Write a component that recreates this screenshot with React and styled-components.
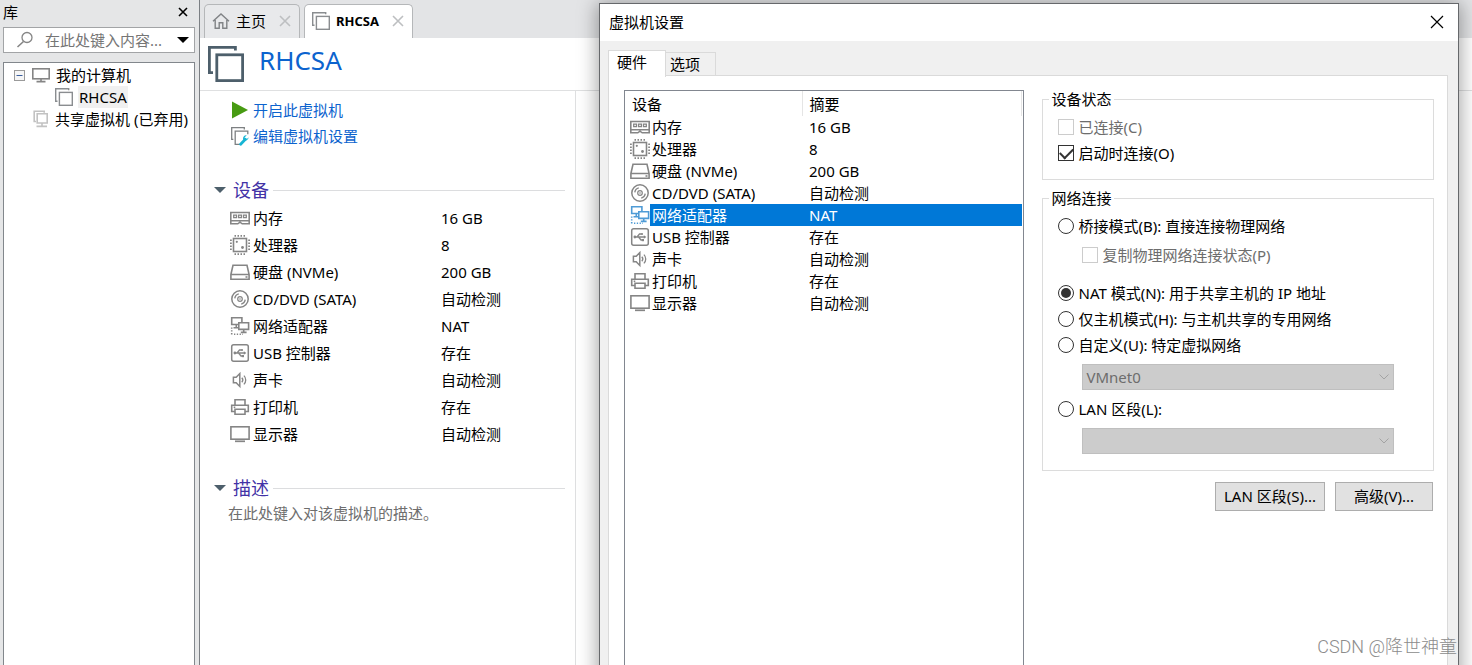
import React, { useState } from "react";
import styled, { createGlobalStyle, css } from "styled-components";

const GlobalStyle = createGlobalStyle`
  * {
    box-sizing: border-box;
  }

  body {
    margin: 0;
    overflow: hidden;
    background: #fff;
    color: #000;
    font-family: "Noto Sans", "Noto Sans CJK SC", sans-serif;
    font-size: 15px;
    line-height: 22px;
  }

  button,
  input,
  select {
    margin: 0;
    font: inherit;
    color: inherit;
  }

  svg {
    display: block;
    flex: none;
  }
`;

// Layout
const Page = styled.div`
  position: relative;
  display: flex;
  height: 100vh;
  overflow: hidden;
`;

const IconButton = styled.button`
  display: flex;
  align-items: center;
  justify-content: center;
  width: ${(p) => p.$size || 16}px;
  height: ${(p) => p.$size || 16}px;
  padding: 0;
  border: none;
  background: none;
  cursor: pointer;
`;

// Library sidebar
const Sidebar = styled.aside`
  display: flex;
  flex-direction: column;
  width: 200px;
  flex: none;
  padding: 0 4px 0 3px;
  background: #e5e6e7;
  border-right: 1px solid #7b7f83;
`;

const SidebarHead = styled.div`
  display: flex;
  align-items: center;
  justify-content: space-between;
  height: 27px;
  padding: 0 4px 3px 0;
`;

const SearchBox = styled.div`
  display: flex;
  align-items: center;
  height: 26px;
  padding: 0 3px 0 12px;
  background: #fff;
  border: 1px solid #a2a4a6;

  input {
    flex: 1;
    min-width: 0;
    padding: 0;
    margin-left: 11px;
    border: none;
    outline: none;
    background: none;
  }

  input::placeholder {
    color: #757575;
    opacity: 1;
  }
`;

const Tree = styled.ul`
  flex: 1;
  margin: 9px 0 0;
  padding: 1px 0 0;
  list-style: none;
  background: #fff;
  border: 1px solid #82878c;
  border-bottom: none;
`;

const TreeItem = styled.li`
  display: flex;
  align-items: center;
  gap: 5px;
  height: 22px;
  padding-left: ${(p) => p.$indent}px;
  white-space: nowrap;

  span {
    padding: 0 1px;
    background: ${(p) => (p.$selected ? "#f0f0f0" : "none")};
  }
`;

// Main area
const Main = styled.main`
  display: flex;
  flex-direction: column;
  flex: 1;
  min-width: 0;
`;

const TabStrip = styled.div`
  display: flex;
  align-items: flex-end;
  gap: 4px;
  height: 38px;
  padding: 0 4px;
  background: #e3e4e6;
`;

const Tab = styled.div`
  display: flex;
  align-items: center;
  justify-content: space-between;
  width: ${(p) => p.$width}px;
  height: 34px;
  padding: 0 6px 2px 7px;
  background: ${(p) => (p.$active ? "#fff" : "#e8e9eb")};
  border: 1px solid #b5b7b9;
  border-bottom: none;
  border-radius: 5px 5px 0 0;
`;

const TabLabel = styled.button`
  display: flex;
  align-items: center;
  gap: 6px;
  padding: 0;
  border: none;
  background: none;
  font-size: ${(p) => (p.$active ? 13 : 15)}px;
  font-weight: ${(p) => (p.$active ? 700 : 400)};
`;

const VmHeader = styled.header`
  display: flex;
  align-items: center;
  gap: 15px;
  height: 53px;
  padding: 0 8px;
  border-bottom: 1px solid #dfe0e1;

  h1 {
    margin: 0;
    padding-bottom: 8px;
    font-size: 26px;
    line-height: 32px;
    font-weight: 400;
    color: #0c63ce;
  }
`;

const Details = styled.div`
  flex: 1;
  width: 376px;
  padding: 6px 10px 0 12px;
  border-right: 1px solid #dfe0e1;
`;

const ActionLink = styled.a`
  display: flex;
  align-items: center;
  gap: 3px;
  width: max-content;
  height: 26px;
  padding-left: 18px;
  color: #0c63ce;
  text-decoration: none;
`;

const SectionTitle = styled.h2`
  display: flex;
  align-items: center;
  gap: 4px;
  margin: 29px 0 2px;
  height: 24px;
  padding-left: 2px;
  font-size: 18px;
  line-height: 24px;
  font-weight: 400;
  color: #4232a6;

  svg {
    margin-right: 3px;
  }

  &::after {
    content: "";
    flex: 1;
    border-top: 1px solid #dcdddf;
  }
`;

const DeviceTable = styled.table`
  width: 100%;
  border-collapse: collapse;
  table-layout: fixed;

  td {
    height: 27px;
    padding: 0;
  }

  td:first-child {
    width: 41px;
    padding-left: 18px;
  }

  td:last-child {
    width: 124px;
  }
`;

const Description = styled.p`
  margin: 0;
  padding-left: 16px;
  color: #6e6e6e;
`;

// Settings dialog
const Dialog = styled.section`
  position: absolute;
  top: 3px;
  left: 599px;
  right: 13px;
  bottom: -20px;
  display: flex;
  flex-direction: column;
  background: #f0f0f0;
  border: 1px solid #66686b;
  box-shadow: 0 2px 18px 2px rgba(0, 0, 0, 0.35);
`;

const DialogTitle = styled.div`
  display: flex;
  align-items: center;
  justify-content: space-between;
  height: 37px;
  padding: 0 13px 2px 9px;
  background: #fff;

  h2 {
    margin: 0;
    font-size: 15px;
    font-weight: 400;
  }
`;

const DialogTabs = styled.div`
  display: flex;
  align-items: flex-end;
  height: 35px;
  padding: 0 8px;
`;

const DialogTab = styled.button`
  height: 24px;
  padding: 0 15px 0 4px;
  background: #f0f0f0;
  border: 1px solid #dadada;
  border-left: none;
  text-align: left;

  ${(p) =>
    p.$active &&
    css`
      height: 27px;
      padding: 0 18px 5px 8px;
      margin-bottom: -1px;
      background: #fff;
      border-left: 1px solid #dadada;
      border-bottom: none;
      z-index: 1;
    `}
`;

const DialogPanel = styled.div`
  flex: 1;
  display: flex;
  gap: 18px;
  margin: -1px 10px 0 8px;
  padding: 12px 13px 0 15px;
  background: #fff;
  border: 1px solid #dadada;
`;

const HardwareList = styled.div`
  flex: 399 1 0;
  margin-top: 2px;
  padding-right: 1px;
  border: 1px solid #828790;
  border-bottom: none;
`;

const HardwareTable = styled.table`
  width: 100%;
  border-collapse: collapse;
  table-layout: fixed;

  th {
    height: 25px;
    padding: 0 7px;
    font-weight: 400;
    text-align: left;
    border-right: 1px solid #e5e5e5;
  }

  td {
    height: 22px;
    padding: 0 0 0 2px;
    line-height: 20px;
  }

  td:first-child {
    padding-left: 5px;
  }

  td:last-child {
    padding-left: 7px;
  }
`;

const HardwareRow = styled.tr`
  cursor: default;

  ${(p) =>
    p.$selected &&
    css`
      td:not(:first-child) {
        color: #fff;
        background: #0078d7;
      }

      svg {
        color: #4e9bd6;
      }
    `}
`;

const Options = styled.div`
  flex: 393 1 0;
  min-width: 0;
`;

const Group = styled.fieldset`
  min-width: 0;
  margin: 0 0 7px;
  padding: 4px 15px ${(p) => p.$bottom}px;
  border: 1px solid #dcdcdc;

  legend {
    margin-left: -9px;
    padding: 0 2px;
  }
`;

const Choice = styled.label`
  display: flex;
  align-items: center;
  gap: 4px;
  height: 26px;
  margin-left: ${(p) => (p.$nested ? 24 : 0)}px;
  margin-top: ${(p) => p.$space || 0}px;
  color: ${(p) => (p.$disabled ? "#6d6d6d" : "#000")};
  white-space: nowrap;
`;

const Checkbox = styled.input.attrs({ type: "checkbox" })`
  appearance: none;
  display: grid;
  place-items: center;
  flex: none;
  width: 16px;
  height: 16px;
  background: #fff;
  border: 1px solid #333;

  &:disabled {
    border-color: #ccc;
  }

  &:checked::after {
    content: "";
    width: 11px;
    height: 6px;
    margin-bottom: 3px;
    border-left: 2px solid #333;
    border-bottom: 2px solid #333;
    transform: rotate(-45deg);
  }
`;

const Radio = styled.input.attrs({ type: "radio" })`
  appearance: none;
  display: grid;
  place-items: center;
  flex: none;
  width: 16px;
  height: 16px;
  background: #fff;
  border: 1px solid #333;
  border-radius: 50%;

  &:checked::after {
    content: "";
    width: 10px;
    height: 10px;
    border-radius: 50%;
    background: #333;
  }
`;

const Combo = styled.div`
  display: grid;
  align-items: center;
  margin: 6px 24px 6px 24px;

  select,
  svg {
    grid-area: 1 / 1;
  }

  select {
    appearance: none;
    width: 100%;
    height: 26px;
    padding: 0 3px;
    color: #6d6d6d;
    background: #ccc;
    border: 1px solid #bfbfbf;
    border-radius: 0;
    opacity: 1;
  }

  svg {
    justify-self: end;
    margin-right: 5px;
    pointer-events: none;
  }
`;

const ButtonRow = styled.div`
  display: flex;
  justify-content: flex-end;
  gap: 10px;
  margin-top: 11px;
  padding-right: 1px;
`;

const PushButton = styled.button`
  min-width: 98px;
  height: 29px;
  padding: 0 8px 2px;
  background: #e1e1e1;
  border: 1px solid #adadad;
`;

const Watermark = styled.div`
  position: absolute;
  right: 15px;
  bottom: 6px;
  font-family: Roboto, "Noto Sans CJK SC", sans-serif;
  font-size: 18px;
  font-weight: 300;
  line-height: 24px;
  color: #8c8c8c;
`;

// Icons
const Svg = ({ w = 20, h = w, color = "#858585", children }) => (
  <svg
    width={w}
    height={h}
    viewBox={`0 0 ${w} ${h}`}
    fill="none"
    stroke="currentColor"
    strokeWidth="1.6"
    color={color}
    aria-hidden="true"
  >
    {children}
  </svg>
);

const CloseIcon = ({ size = 12, color = "#000", width = 1.2 }) => (
  <Svg w={size} color={color}>
    <path d={`M1 1L${size - 1} ${size - 1}M${size - 1} 1L1 ${size - 1}`} strokeWidth={width} />
  </Svg>
);

const MemoryIcon = () => (
  <Svg>
    <path d="M.8 4.5h18.4v11.3h-7l-2.2-1.6-2.2 1.6h-7zM.8 12.8h18.4" />
    <path d="M3.7 7.2h2.8v2.4H3.7zM8.6 7.2h2.8v2.4H8.6zM13.5 7.2h2.8v2.4h-2.8z" strokeWidth="1.3" />
  </Svg>
);

const CpuIcon = () => (
  <Svg>
    <rect x="3.5" y="3.5" width="13" height="13" />
    <path
      d="M4.500.9h11.500M4.500 19.100h11.500M.9 4.500v11.500M19.100 4.500v11.500"
      strokeWidth="1.8"
      strokeDasharray="1.5 1.500"
    />
    <circle cx="6.8" cy="6.8" r="1.1" fill="currentColor" stroke="none" />
    <circle cx="12.5" cy="12.5" r="1.4" fill="currentColor" stroke="none" />
  </Svg>
);

const DiskIcon = () => (
  <Svg>
    <path d="M.9 12.5L3 3.2h14l2.1 9.3v4.8H.9zM.9 12.5h18.2" />
    <path d="M15.5 15h2" />
  </Svg>
);

const DiscIcon = () => (
  <Svg>
    <circle cx="10" cy="10" r="8.2" strokeWidth="1.5" />
    <circle cx="10" cy="10" r="2.3" strokeWidth="1.2" />
    <circle cx="10" cy="10" r=".8" fill="currentColor" stroke="none" />
    <path d="M4.8 9.3a5.2 5.2 0 0 1 4-4.400M15.200 10.700a5.200 5.200 0 0 1-4 4.400" strokeWidth="1.4" />
  </Svg>
);

const NetworkIcon = () => (
  <Svg>
    <path d="M8.5 8.500H1.700V1.700h10.200v4.500M6.300 8.500v3M3.500 11.700H8" />
    <path d="M8.800 6.800h9.800v6.600H8.800zM13.700 13.400v2.800M10.800 16.400h5.800" />
    <path d="M1.700 11.500v7M4 18.200h9" strokeDasharray="1.3 1.5" />
  </Svg>
);

const UsbIcon = () => (
  <Svg>
    <rect x="1.7" y="1.7" width="16.6" height="16.6" rx="2" strokeWidth="1.5" />
    <path d="M5 10h10M7 10l2.5-3h2M8.5 10l2.500 3h1.500" strokeWidth="1.3" />
    <path d="M13.8 8.200l2.600 1.800-2.600 1.800z" fill="currentColor" stroke="none" />
    <circle cx="4.9" cy="10" r="1.4" fill="currentColor" stroke="none" />
    <circle cx="12" cy="7" r="1.1" fill="currentColor" stroke="none" />
    <path d="M11.800 12h2.200v2.200h-2.200z" fill="currentColor" stroke="none" />
  </Svg>
);

const SoundIcon = () => (
  <Svg>
    <path d="M3.400 7.300h2.800L9.800 3.600v12.800l-3.600-3.700H3.400z" strokeWidth="1.5" />
    <path d="M11.800 7.700a3.400 3.400 0 0 1 0 4.600M13.900 5.600a6.200 6.200 0 0 1 0 8.800" strokeWidth="1.3" />
  </Svg>
);

const PrinterIcon = () => (
  <Svg>
    <path d="M5 8V2.700h10V8M5 14.500H1.700V8.200h16.600v6.300H15M5 12.300h10v5H5z" />
    <path d="M3.700 10.300h1.600" />
  </Svg>
);

const DisplayIcon = () => (
  <Svg>
    <rect x=".9" y="2.8" width="18.2" height="12.4" />
    <path d="M5 17.3h10" strokeWidth="1.7" />
  </Svg>
);

const VmIcon = ({ size = 18, color = "#8a8d90" }) => (
  <svg
    width={size}
    height={size}
    viewBox="0 0 18 18"
    fill="none"
    stroke={color}
    strokeWidth="1.4"
    aria-hidden="true"
  >
    <path d="M2.500 13.300H.7V.7h13v1.600" />
    <rect x="4.4" y="4.4" width="12.9" height="12.9" />
  </svg>
);

const HomeIcon = () => (
  <Svg w={18} color="#808386">
    <path d="M1 9.300L9 2l8 7.300M3.200 8v8.300h4v-5.500h3.600v5.500h4V8" strokeWidth="1.4" />
  </Svg>
);

const SearchIcon = () => (
  <Svg w={18}>
    <circle cx="11" cy="6.5" r="5" strokeWidth="1.3" />
    <path d="M7.500 10.500L1.500 16" />
  </Svg>
);

const CaretIcon = ({ color = "#000" }) => (
  <Svg w={12} h={6} color={color}>
    <path d="M0 0h12L6 6z" fill="currentColor" stroke="none" />
  </Svg>
);

const CollapseIcon = () => (
  <Svg w={11}>
    <rect x=".5" y=".5" width="10" height="10" strokeWidth="1" stroke="#9a9a9a" fill="#f6f6f6" />
    <path d="M2.500 5.500h6" stroke="#3b5f9e" strokeWidth="1" />
  </Svg>
);

const ComputerIcon = () => (
  <Svg w={18} h={16}>
    <rect x=".8" y="1.8" width="16.4" height="10" />
    <path d="M9 12v2.400M4.500 14.600h9" />
  </Svg>
);

const SharedIcon = () => (
  <Svg w={16} h={18} color="#c2c2c2">
    <path d="M3 11.500H1.200V1.200h10v1.500" />
    <path d="M4.200 3.800h10V13h-10zM9 13v3M3.500 16.400h10.500" />
  </Svg>
);

const PlayIcon = () => (
  <Svg color="#479b12">
    <path d="M2 1.500v17L18 10z" fill="currentColor" stroke="none" />
  </Svg>
);

const EditIcon = () => (
  <Svg color="#7d8082">
    <path d="M3.300 13.300H1.700V1.700h12.600v1.800M10 18.300H5.200V5.200h12.600v3" strokeWidth="1.3" />
    <path d="M10.600 18.200l4.800-5" stroke="#16b5d4" strokeWidth="2.800" strokeLinecap="round" />
    <path
      d="M18.600 11.300l-1.900 2-1.600-.4-.4-1.600 2-1.900a3.200 3.200 0 0 0-3.500 4.300 3.200 3.200 0 0 0 5.400-2.400z"
      fill="#16b5d4"
      stroke="none"
    />
  </Svg>
);

const ChevronIcon = () => (
  <Svg w={10} h={6} color="#a3a3a3">
    <path d="M.5 .5L5 5L9.5 .5" strokeWidth="1" />
  </Svg>
);

const devices = [
  { name: "内存", summary: "16 GB", Icon: MemoryIcon },
  { name: "处理器", summary: "8", Icon: CpuIcon },
  { name: "硬盘 (NVMe)", summary: "200 GB", Icon: DiskIcon },
  { name: "CD/DVD (SATA)", summary: "自动检测", Icon: DiscIcon },
  { name: "网络适配器", summary: "NAT", Icon: NetworkIcon },
  { name: "USB 控制器", summary: "存在", Icon: UsbIcon },
  { name: "声卡", summary: "自动检测", Icon: SoundIcon },
  { name: "打印机", summary: "存在", Icon: PrinterIcon },
  { name: "显示器", summary: "自动检测", Icon: DisplayIcon },
];

const Library = () => (
  <Sidebar>
    <SidebarHead>
      <span>库</span>
      <IconButton aria-label="关闭库">
        <CloseIcon size={10} width={1.6} />
      </IconButton>
    </SidebarHead>
    <SearchBox>
      <SearchIcon />
      <input type="text" aria-label="搜索" placeholder="在此处键入内容..." />
      <IconButton aria-label="搜索选项">
        <CaretIcon />
      </IconButton>
    </SearchBox>
    <Tree>
      <TreeItem $indent={8}>
        <IconButton $size={15} aria-label="折叠">
          <CollapseIcon />
        </IconButton>
        <ComputerIcon />
        <span>我的计算机</span>
      </TreeItem>
      <TreeItem $indent={51} $selected>
        <VmIcon />
        <span>RHCSA</span>
      </TreeItem>
      <TreeItem $indent={29}>
        <SharedIcon />
        <span>共享虚拟机 (已弃用)</span>
      </TreeItem>
    </Tree>
  </Sidebar>
);

const VmSummary = () => (
  <Main>
    <TabStrip>
      <Tab $width={96}>
        <TabLabel>
          <HomeIcon />
          主页
        </TabLabel>
        <IconButton aria-label="关闭主页">
          <CloseIcon color="#bdbfc1" width={1.6} />
        </IconButton>
      </Tab>
      <Tab $width={109} $active>
        <TabLabel $active>
          <VmIcon />
          RHCSA
        </TabLabel>
        <IconButton aria-label="关闭 RHCSA">
          <CloseIcon color="#bdbfc1" width={1.6} />
        </IconButton>
      </Tab>
    </TabStrip>
    <VmHeader>
      <VmIcon size={36} color="#4d5f6b" />
      <h1>RHCSA</h1>
    </VmHeader>
    <Details>
      <ActionLink href="#start">
        <PlayIcon />
        开启此虚拟机
      </ActionLink>
      <ActionLink href="#edit">
        <EditIcon />
        编辑虚拟机设置
      </ActionLink>
      <SectionTitle>
        <CaretIcon color="#4d5f6b" />
        设备
      </SectionTitle>
      <DeviceTable>
        <tbody>
          {devices.map(({ name, summary, Icon }) => (
            <tr key={name}>
              <td>
                <Icon />
              </td>
              <td>{name}</td>
              <td>{summary}</td>
            </tr>
          ))}
        </tbody>
      </DeviceTable>
      <SectionTitle>
        <CaretIcon color="#4d5f6b" />
        描述
      </SectionTitle>
      <Description>在此处键入对该虚拟机的描述。</Description>
    </Details>
  </Main>
);

const SettingsDialog = () => {
  const [selected, setSelected] = useState("网络适配器");
  const [mode, setMode] = useState("nat");
  const [autoConnect, setAutoConnect] = useState(true);

  const radio = (value) => (
    <Radio name="mode" checked={mode === value} onChange={() => setMode(value)} />
  );

  return (
    <Dialog role="dialog" aria-labelledby="settings-title">
      <DialogTitle>
        <h2 id="settings-title">虚拟机设置</h2>
        <IconButton aria-label="关闭">
          <CloseIcon size={14} />
        </IconButton>
      </DialogTitle>
      <DialogTabs>
        <DialogTab $active>硬件</DialogTab>
        <DialogTab>选项</DialogTab>
      </DialogTabs>
      <DialogPanel>
        <HardwareList>
          <HardwareTable>
            <colgroup>
              <col width="25" />
              <col width="152" />
              <col />
            </colgroup>
            <thead>
              <tr>
                <th colSpan={2}>设备</th>
                <th>摘要</th>
              </tr>
            </thead>
            <tbody>
              {devices.map(({ name, summary, Icon }) => (
                <HardwareRow
                  key={name}
                  $selected={name === selected}
                  onClick={() => setSelected(name)}
                >
                  <td>
                    <Icon />
                  </td>
                  <td>{name}</td>
                  <td>{summary}</td>
                </HardwareRow>
              ))}
            </tbody>
          </HardwareTable>
        </HardwareList>

        <Options>
          <Group $bottom={13}>
            <legend>设备状态</legend>
            <Choice $disabled>
              <Checkbox disabled />
              已连接(C)
            </Choice>
            <Choice>
              <Checkbox
                checked={autoConnect}
                onChange={(e) => setAutoConnect(e.target.checked)}
              />
              启动时连接(O)
            </Choice>
          </Group>

          <Group $bottom={10}>
            <legend>网络连接</legend>
            <Choice>{radio("bridged")}桥接模式(B): 直接连接物理网络</Choice>
            <Choice $nested $disabled $space={3}>
              <Checkbox disabled />
              复制物理网络连接状态(P)
            </Choice>
            <Choice $space={12}>{radio("nat")}NAT 模式(N): 用于共享主机的 IP 地址</Choice>
            <Choice>{radio("hostonly")}仅主机模式(H): 与主机共享的专用网络</Choice>
            <Choice>{radio("custom")}自定义(U): 特定虚拟网络</Choice>
            <Combo>
              <select aria-label="特定虚拟网络" disabled>
                <option>VMnet0</option>
              </select>
              <ChevronIcon />
            </Combo>
            <Choice>{radio("lan")}LAN 区段(L):</Choice>
            <Combo>
              <select aria-label="LAN 区段" disabled />
              <ChevronIcon />
            </Combo>
          </Group>

          <ButtonRow>
            <PushButton>LAN 区段(S)...</PushButton>
            <PushButton>高级(V)...</PushButton>
          </ButtonRow>
        </Options>
      </DialogPanel>
    </Dialog>
  );
};

const App = () => {
  return (
    <Page>
      <GlobalStyle />
      <Library />
      <VmSummary />
      <SettingsDialog />
      <Watermark>CSDN @降世神童</Watermark>
    </Page>
  );
};

export default App;
